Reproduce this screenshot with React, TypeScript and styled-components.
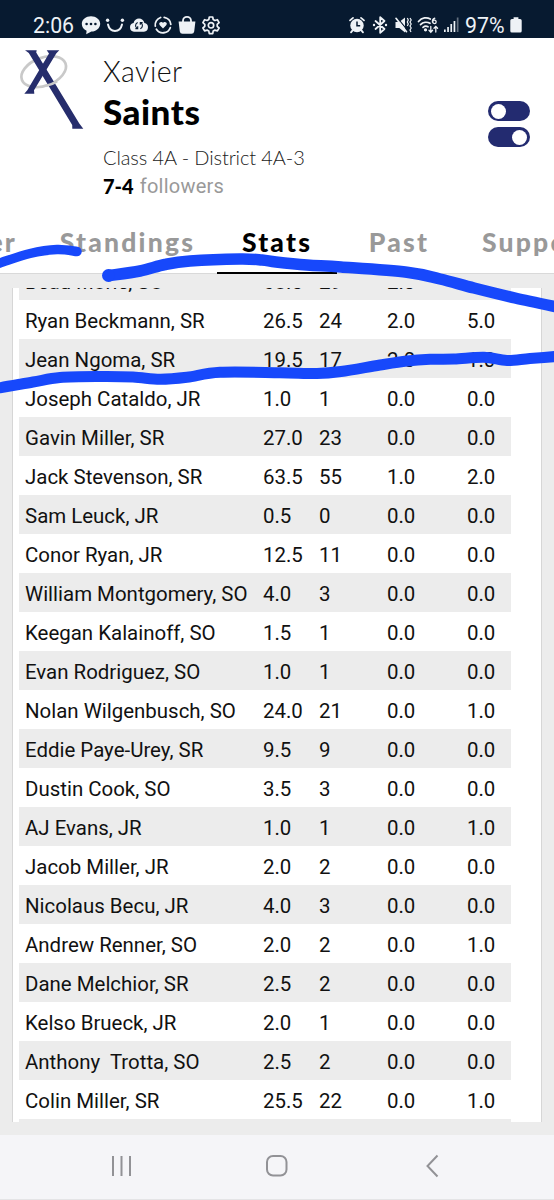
import React from "react";
import styled, { createGlobalStyle } from "styled-components";

const GlobalStyle = createGlobalStyle`
  * { box-sizing: border-box; }
  body { margin: 0; background: #ececec; font-family: Roboto, "Liberation Sans", sans-serif; }
`;

const Screen = styled.div`
  position: relative;
  display: flex;
  flex-direction: column;
  width: 554px;
  height: 1200px;
  overflow: hidden;
  background: #ececec;
`;

const StatusBar = styled.div`
  display: flex;
  justify-content: space-between;
  height: 38px;
  flex: none;
  padding: 15px 32px 3px 33px;
  background: #071a30;
  color: #eef2f6;
`;

const StatusGroup = styled.div<{ $gap: number }>`
  display: flex;
  align-items: center;
  gap: ${(p) => p.$gap}px;
  height: 20px;
`;

const StatusText = styled.span<{ $width: number }>`
  width: ${(p) => p.$width}px;
  font-size: 21.3px;
  line-height: 22px;
  padding-top: 1px;
  white-space: nowrap;
`;

const Header = styled.header`
  display: flex;
  flex: none;
  height: 174px;
  background: #fff;
`;

const LogoBox = styled.div`
  width: 103px;
  flex: none;
  padding: 11px 0 0 18px;
`;

const TeamInfo = styled.div`
  flex: 1;
  display: flex;
  flex-direction: column;
  padding-top: 17px;
  font-family: Lato, sans-serif;
  white-space: nowrap;
`;

const School = styled.div`
  height: 33px;
  line-height: 33px;
  font-size: 28.5px;
  letter-spacing: 0.5px;
  font-weight: 300;
  color: #111;
`;

const TeamName = styled.h1`
  margin: 0;
  height: 48px;
  line-height: 47px;
  font-size: 35px;
  letter-spacing: 0.5px;
  font-weight: 900;
  color: #000;
`;

const ClassLine = styled.div`
  height: 41px;
  line-height: 42px;
  font-size: 20px;
  letter-spacing: -0.1px;
  font-weight: 300;
  color: #222;
`;

const RecordLine = styled.div`
  display: flex;
  gap: 6px;
  height: 20px;
  line-height: 18px;
  font-family: Roboto, sans-serif;
  font-size: 20px;
  letter-spacing: 0.25px;
  color: #999;
`;

const Wins = styled.b`
  font-family: Lato, sans-serif;
  font-weight: 900;
  letter-spacing: 0;
  color: #000;
`;

const Toggles = styled.div`
  display: flex;
  flex-direction: column;
  gap: 6px;
  padding: 63px 24px 0 0;
`;

const Toggle = styled.div<{ $on?: boolean }>`
  display: flex;
  justify-content: ${(p) => (p.$on ? "flex-end" : "flex-start")};
  width: 42px;
  height: 20px;
  padding: 2.5px 3px;
  border-radius: 10px;
  background: #232b70;
`;

const Knob = styled.i`
  width: 15px;
  height: 15px;
  border-radius: 50%;
  background: #fff;
`;

const Tabs = styled.nav`
  display: flex;
  flex: none;
  height: 62px;
  background: #fff;
  border-bottom: 1px solid #d9d9d9;
`;

const Tab = styled.div<{ $width: number; $active?: boolean; $align?: string; $pad?: string }>`
  display: flex;
  flex: none;
  justify-content: ${(p) => p.$align ?? "center"};
  width: ${(p) => p.$width}px;
  height: 62px;
  padding: ${(p) => p.$pad ?? "0"};
  overflow: hidden;
  line-height: 61px;
  font-family: Lato, sans-serif;
  font-size: 26.5px;
  font-weight: 900;
  letter-spacing: 2.2px;
  color: ${(p) => (p.$active ? "#000" : "#999")};
  border-bottom: ${(p) => (p.$active ? "2px solid #000" : "0")};
`;

const Content = styled.main`
  flex: 1;
  padding: 14px 12px 13px;
  overflow: hidden;
`;

const Card = styled.section`
  display: flex;
  flex-direction: column;
  height: 834px;
  padding-left: 6px;
  overflow: hidden;
  background: #fff;
  border: solid #d6d6d6;
  border-width: 0 1px;
`;

const Table = styled.div`
  width: 492px;
  margin-top: -27px;
`;

const Row = styled.div<{ $shade: boolean }>`
  display: grid;
  grid-template-columns: 238px 56px 68px 80px 50px;
  height: 39px;
  padding-left: 6px;
  line-height: 42px;
  font-size: 20.45px;
  white-space: pre;
  color: #111;
  background: ${(p) => (p.$shade ? "#ececec" : "#fff")};
`;

const NavBar = styled.footer`
  display: flex;
  flex: none;
  align-items: center;
  height: 65px;
  padding: 0 0 2px 110px;
  gap: 132px;
  background: #f5f5f8;
  border-bottom: 1px solid #e4e4e6;
`;

const Marker = styled.svg`
  position: absolute;
  left: 0;
  top: 230px;
  pointer-events: none;
`;

const players: string[][] = [
  ["Beau Morie, SO", "68.5", "29", "2.0", ""],
  ["Ryan Beckmann, SR", "26.5", "24", "2.0", "5.0"],
  ["Jean Ngoma, SR", "19.5", "17", "2.0", "1.0"],
  ["Joseph Cataldo, JR", "1.0", "1", "0.0", "0.0"],
  ["Gavin Miller, SR", "27.0", "23", "0.0", "0.0"],
  ["Jack Stevenson, SR", "63.5", "55", "1.0", "2.0"],
  ["Sam Leuck, JR", "0.5", "0", "0.0", "0.0"],
  ["Conor Ryan, JR", "12.5", "11", "0.0", "0.0"],
  ["William Montgomery, SO", "4.0", "3", "0.0", "0.0"],
  ["Keegan Kalainoff, SO", "1.5", "1", "0.0", "0.0"],
  ["Evan Rodriguez, SO", "1.0", "1", "0.0", "0.0"],
  ["Nolan Wilgenbusch, SO", "24.0", "21", "0.0", "1.0"],
  ["Eddie Paye-Urey, SR", "9.5", "9", "0.0", "0.0"],
  ["Dustin Cook, SO", "3.5", "3", "0.0", "0.0"],
  ["AJ Evans, JR", "1.0", "1", "0.0", "1.0"],
  ["Jacob Miller, JR", "2.0", "2", "0.0", "0.0"],
  ["Nicolaus Becu, JR", "4.0", "3", "0.0", "0.0"],
  ["Andrew Renner, SO", "2.0", "2", "0.0", "1.0"],
  ["Dane Melchior, SR", "2.5", "2", "0.0", "0.0"],
  ["Kelso Brueck, JR", "2.0", "1", "0.0", "0.0"],
  ["Anthony  Trotta, SO", "2.5", "2", "0.0", "0.0"],
  ["Colin Miller, SR", "25.5", "22", "0.0", "1.0"],
  ["", "", "", "", ""],
];

// Turns a list of points into a smooth curve through all of them.
function smooth(pts: number[][]): string {
  let d = `M${pts[0][0]} ${pts[0][1]}`;
  for (let i = 0; i < pts.length - 1; i++) {
    const a = pts[Math.max(i - 1, 0)];
    const b = pts[i];
    const c = pts[i + 1];
    const e = pts[Math.min(i + 2, pts.length - 1)];
    d += `C${b[0] + (c[0] - a[0]) / 6} ${b[1] + (c[1] - a[1]) / 6} ${c[0] - (e[0] - b[0]) / 6} ${c[1] - (e[1] - b[1]) / 6} ${c[0]} ${c[1]}`;
  }
  return d;
}

const strokes = [
  { width: 9.5, points: [[-8, 265.5], [0, 263], [30, 253.5], [57, 249.5], [77, 251.5]] },
  { width: 11.5, points: [[109, 275.5], [140, 271], [165, 264.5], [190, 261], [240, 259], [262, 260], [276, 262], [307, 265], [341, 267], [407, 272.3], [440, 279], [474, 288], [515, 298], [562, 308]] },
  { width: 11, points: [[-8, 388], [0, 387.7], [33, 382], [60, 377.5], [100, 376.5], [133, 377], [160, 379.3], [187, 377.3], [220, 372.3], [280, 372.7], [317, 373.5], [341, 371.5], [380, 365], [407, 361], [430, 359.3], [454, 359], [484, 357.2], [507, 360.5], [530, 358.5], [562, 356]] },
];

const BG = "#071a30";

const ChatIcon = () => (
  <svg width="20" height="20" viewBox="0 0 20 20">
    <path d="M10 1.2c5 0 9.2 3.2 9.2 7.6S15 16.6 10.4 16.6L5.2 19.2l.4-3.4C2.600 14.600.8 12 .8 8.800.8 4.400 5 1.200 10 1.200Z" fill="currentColor" />
    <g fill={BG}><circle cx="5.600" cy="9" r="1.300" /><circle cx="10" cy="9" r="1.300" /><circle cx="14.400" cy="9" r="1.300" /></g>
  </svg>
);
const SmileIcon = () => (
  <svg width="20" height="20" viewBox="0 0 20 20">
    <path d="M3 9.500C4 14 6.500 16 10 16s6-2 7-6.500" fill="none" stroke="currentColor" strokeWidth="2" strokeLinecap="round" />
    <circle cx="2.600" cy="5.200" r="1.700" fill="currentColor" /><circle cx="17.400" cy="5.200" r="1.700" fill="currentColor" />
  </svg>
);
const CloudIcon = () => (
  <svg width="20" height="20" viewBox="0 0 20 20">
    <path d="M5 16.800a4.400 4.400 0 0 1-.4-8.700C5.200 5.200 7.400 3.600 10 3.600s4.800 1.600 5.400 4.500a4.400 4.400 0 0 1-.4 8.700Z" fill="currentColor" />
    <path d="M8.700 7.400a3.400 3.400 0 0 0-.6 6M6.400 13.600h2.300v-2.300M11.300 13.700a3.400 3.400 0 0 0 .6-6M13.600 7.500h-2.300v2.300" fill="none" stroke={BG} strokeWidth="1.100" />
  </svg>
);
const HeartIcon = () => (
  <svg width="20" height="20" viewBox="0 0 20 20">
    <path d="M7.600 2.500a7.800 7.800 0 0 0-5.300 8.700M3.400 14.200a7.800 7.800 0 0 0 13.900-1.500M17.800 9.400a7.800 7.800 0 0 0-6.600-7.100" fill="none" stroke="currentColor" strokeWidth="1.800" strokeLinecap="round" />
    <path d="M10 13.600 6.800 10.300a1.900 1.900 0 0 1 0-2.700 2 2 0 0 1 3.200.4 2 2 0 0 1 3.200-.4 1.900 1.900 0 0 1 0 2.700Z" fill="currentColor" />
  </svg>
);
const BagIcon = () => (
  <svg width="20" height="20" viewBox="0 0 20 20">
    <path d="M1.600 6.600h16.800l-1.200 9.800a2.700 2.700 0 0 1-2.700 2.300h-9a2.700 2.700 0 0 1-2.700-2.300Z" fill="currentColor" />
    <path d="M6 8V5.800a4 4 0 0 1 8 0V8" fill="none" stroke="currentColor" strokeWidth="1.800" />
  </svg>
);
const GearIcon = () => (
  <svg width="20" height="20" viewBox="0 0 20 20" fill="none" stroke="currentColor" strokeWidth="1.700" strokeLinejoin="round">
    <path d="M8.300 2h3.400l.5 2.500 1.700 1 2.500-.8 1.700 2.900-1.900 1.700v2l1.900 1.700-1.700 2.900-2.500-.8-1.700 1-.5 2.500H8.300l-.5-2.500-1.700-1-2.500.8L1.900 13l1.900-1.700v-2L1.900 7.600l1.700-2.900 2.500.8 1.700-1Z" />
    <circle cx="10" cy="10.300" r="2.700" />
  </svg>
);
const AlarmIcon = () => (
  <svg width="18" height="20" viewBox="0 0 18 20">
    <circle cx="9" cy="10.500" r="6.700" fill="currentColor" />
    <path d="M2 5.400 5 2.900M16 5.400l-3-2.500M4.400 15.600l-1.400 1.800M13.600 15.600l1.400 1.800" stroke="currentColor" strokeWidth="1.800" strokeLinecap="round" />
    <path d="M9 6.500v4.300h3.200" fill="none" stroke={BG} strokeWidth="1.500" />
  </svg>
);
const BluetoothIcon = () => (
  <svg width="18" height="20" viewBox="0 0 18 20">
    <path d="m4.500 6 9 8-4.300 3.800V2.200L13.500 6l-9 8" fill="none" stroke="currentColor" strokeWidth="1.800" strokeLinejoin="round" strokeLinecap="round" />
    <circle cx="3" cy="10" r="1.200" fill="currentColor" /><circle cx="15" cy="10" r="1.200" fill="currentColor" />
  </svg>
);
const MuteIcon = () => (
  <svg width="18" height="20" viewBox="0 0 18 20">
    <path d="M1.500 7h3.800l5.700-4.500v15L5.300 13H1.500Z" fill="currentColor" />
    <path d="m3.200 2.600 10.500 13" stroke={BG} strokeWidth="1.200" />
    <path d="m2 3.300 10.500 13.400" stroke="currentColor" strokeWidth="1.700" strokeLinecap="round" />
    <path d="m13.300 3 1 2-1 2 1 2-1 2M16 3l1.200 2L16 7l1.200 2L16 11l1.200 2-1.200 2 1 2" fill="none" stroke="currentColor" strokeWidth="1.200" />
  </svg>
);
const WifiIcon = () => (
  <svg width="22" height="20" viewBox="0 0 22 20" fill="none" stroke="currentColor" strokeWidth="1.700" strokeLinecap="round">
    <path d="M1.500 6.500C5 2.300 10 2 13.300 4M3.500 9.700C6 7 10 6.500 13 8.300M6 12.400c1.600-1.400 3.500-1.500 5-.6" />
    <circle cx="8.500" cy="14.800" r=".8" fill="currentColor" />
    <path d="M17.800 3.200c-2 .8-2.600 2.500-2.300 4M17.500 5.200a1.700 1.700 0 1 1-.1 3.400 1.700 1.700 0 0 1 .1-3.400" strokeWidth="1.300" />
    <path d="M13.800 11.500v5.500M12 15.300l1.800 1.900 1.800-1.900M18.800 17v-5.500M17 13.300l1.800-1.900 1.800 1.900" strokeWidth="1.300" />
  </svg>
);
const SignalIcon = () => (
  <svg width="16" height="20" viewBox="0 0 16 20" fill="currentColor">
    <rect x="0" y="14.500" width="1.700" height="2.500" /><rect x="3.200" y="12" width="1.700" height="5" /><rect x="6.400" y="9" width="1.700" height="8" /><rect x="9.600" y="6" width="1.700" height="11" />
    <rect x="12.800" y="2.500" width="1.700" height="14.500" opacity=".4" />
  </svg>
);
const BatteryIcon = () => (
  <svg width="12" height="20" viewBox="0 0 12 20">
    <path d="M3.600 2.200h4.800V4h1.700a1.600 1.600 0 0 1 1.600 1.600V16a1.600 1.600 0 0 1-1.600 1.600H1.900A1.600 1.600 0 0 1 .3 16V5.600A1.600 1.600 0 0 1 1.900 4h1.700Z" fill="currentColor" />
  </svg>
);

const Logo = () => (
  <svg width="68" height="82" viewBox="0 0 68 82">
    <ellipse cx="25.700" cy="22.700" rx="23.300" ry="14" transform="rotate(-21 25.700 22.700)" fill="none" stroke="#c9c9c9" strokeWidth="2.700" />
    <path d="M7 1.300H18.700L18.200 3.500 61.300 74.500 65.300 79.700H54.300L54.200 76 10.800 4Z" fill="#262d6c" />
    <path d="M28.700 1.300H41.300L38.200 4.500 16 41.300 16.300 44.700H6.300L9.300 41.300 31 4.500Z" fill="#262d6c" />
    <path d="M28 36.800c4-.8 7-2 11-4.500" fill="none" stroke="#c9c9c9" strokeWidth="2.600" />
  </svg>
);

export default function App() {
  return (
    <Screen>
      <GlobalStyle />
      <StatusBar>
        <StatusGroup $gap={4}>
          <StatusText $width={44}>2:06</StatusText>
          <ChatIcon /><SmileIcon /><CloudIcon /><HeartIcon /><BagIcon /><GearIcon />
        </StatusGroup>
        <StatusGroup $gap={5}>
          <AlarmIcon /><BluetoothIcon /><MuteIcon /><WifiIcon /><SignalIcon />
          <StatusText $width={40}>97%</StatusText>
          <BatteryIcon />
        </StatusGroup>
      </StatusBar>

      <Header>
        <LogoBox><Logo /></LogoBox>
        <TeamInfo>
          <School>Xavier</School>
          <TeamName>Saints</TeamName>
          <ClassLine>Class 4A - District 4A-3</ClassLine>
          <RecordLine><Wins>7-4</Wins>followers</RecordLine>
        </TeamInfo>
        <Toggles>
          <Toggle><Knob /></Toggle>
          <Toggle $on><Knob /></Toggle>
        </Toggles>
      </Header>

      <Tabs>
        <Tab $width={38} $align="flex-end" $pad="0 21px 0 0">Roster</Tab>
        <Tab $width={179}>Standings</Tab>
        <Tab $width={120} $active>Stats</Tab>
        <Tab $width={124}>Past</Tab>
        <Tab $width={93} $align="flex-start" $pad="0 0 0 21px">Supporters</Tab>
      </Tabs>

      <Content>
        <Card>
          <Table>
            {players.map((cells, i) => (
              <Row key={i} $shade={i % 2 === 0}>
                {cells.map((cell, j) => <span key={j}>{cell}</span>)}
              </Row>
            ))}
          </Table>
        </Card>
      </Content>

      <NavBar>
        <svg width="24" height="24" viewBox="0 0 24 24" stroke="#929296" strokeWidth="2"><path d="M3 2v20M11.500 2v20M20 2v20" /></svg>
        <svg width="22" height="24" viewBox="0 0 22 24" fill="none" stroke="#929296" strokeWidth="2"><rect x="1" y="2" width="19.500" height="19.500" rx="6" /></svg>
        <svg width="22" height="24" viewBox="0 0 22 24" fill="none" stroke="#929296" strokeWidth="2"><path d="M17.500 1.500 7.500 12l10 10.500" /></svg>
      </NavBar>

      <Marker width="554" height="170" viewBox="0 230 554 170" fill="none" stroke="#1748fb" strokeLinecap="round" strokeLinejoin="round">
        {strokes.map((s, i) => <path key={i} d={smooth(s.points)} strokeWidth={s.width} />)}
        <circle cx="108.500" cy="275.500" r="6.500" fill="#1748fb" stroke="none" />
      </Marker>
    </Screen>
  );
}
